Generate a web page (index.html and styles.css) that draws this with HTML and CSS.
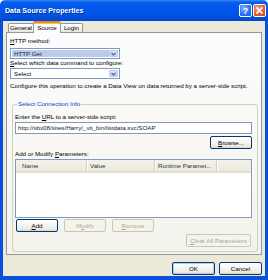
FILE: index.html
```html
<!DOCTYPE html>
<html lang="en">
<head>
  <meta charset="UTF-8" />
  <title>Data Source Properties</title>
  <link rel="stylesheet" href="styles.css">
</head>
<body>
  <div class="window">
    <div class="titlebar">
      <span class="title">Data Source Properties</span>
      <div class="caption">
        <span class="cap help">?</span>
        <span class="cap close">
          <svg width="7" height="7" viewBox="0 0 7 7"><path d="M1 1L6 6M6 1L1 6" stroke="#fff" stroke-width="1.6" stroke-linecap="square"/></svg>
        </span>
      </div>
    </div>

    <div class="frame">
      <div class="tabs">
        <span class="tab t-general">General</span>
        <span class="tab t-source active">Source</span>
        <span class="tab t-login">Login</span>
      </div>

      <div class="panel">
        <div class="lbl first"><u>H</u>TTP method:</div>
        <div class="combo">
          <span class="val sel">HTTP Get</span>
          <span class="drop"><svg width="5" height="4" viewBox="0 0 5 4"><path d="M0.5 0.8L2.5 2.8L4.5 0.8" fill="none" stroke="#4d6185" stroke-width="1.2"/></svg></span>
        </div>
        <div class="lbl"><u>S</u>elect which data command to configure:</div>
        <div class="combo second">
          <span class="val">Select</span>
          <span class="drop"><svg width="5" height="4" viewBox="0 0 5 4"><path d="M0.5 0.8L2.5 2.8L4.5 0.8" fill="none" stroke="#4d6185" stroke-width="1.2"/></svg></span>
        </div>
        <div class="lbl note">Configure this operation to create a Data View on data returned by a server-side script.</div>

        <fieldset class="group">
          <legend>Select Connection Info</legend>
          <div class="lbl url-lbl">Enter the <u>U</u>RL to a server-side script:</div>
          <div class="field">http://sbx08/sites/Harry/_vti_bin/listdata.svc/SOAP</div>
          <div class="row right">
            <button class="btn"><u>B</u>rowse...</button>
          </div>
          <div class="lbl params-lbl">Add or Modify <u>P</u>arameters:</div>
          <div class="list">
            <div class="list-head">
              <span class="col c-name">Name</span>
              <span class="col c-value">Value</span>
              <span class="col c-runtime">Runtime Paramet...</span>
              <span class="col c-rest"></span>
            </div>
          </div>
          <div class="row actions">
            <button class="btn"><u>A</u>dd</button>
            <button class="btn off">M<u>o</u>dify</button>
            <button class="btn off"><u>R</u>emove</button>
          </div>
          <div class="row right">
            <button class="btn off wide"><u>C</u>lear All Parameters</button>
          </div>
        </fieldset>
      </div>

      <div class="footer">
        <button class="btn default">OK</button>
        <button class="btn">Cancel</button>
      </div>
    </div>
  </div>
</body>
</html>
```

FILE: styles.css
```css
* {
  box-sizing: border-box;
}

html,
body {
  margin: 0;
  padding: 0;
}

body {
  width: 268px;
  height: 280px;
  overflow: hidden;
  background: #fff;
  font-family: "Liberation Sans", Arial, sans-serif;
  font-size: 6.2px;
  color: #000;
}

u {
  text-decoration: underline;
  text-underline-offset: 1px;
}

.window {
  width: 268px;
  height: 280px;
  display: flex;
  flex-direction: column;
}

/* title bar */
.titlebar {
  height: 21px;
  flex: none;
  display: flex;
  align-items: center;
  justify-content: space-between;
  padding: 0 2px 0 5px;
  border-radius: 5px 5px 0 0;
  background: linear-gradient(#3d8ef8 0, #0a5fea 2px, #0058ee 6px, #0055e5 14px, #0047d0 21px);
}

.title {
  color: #fff;
  font-size: 7.1px;
  font-weight: bold;
  text-shadow: 1px 1px 0 #0b2a9a;
}

.caption {
  display: flex;
  gap: 1px;
}

.cap {
  width: 13px;
  height: 13px;
  border: 1px solid #fff;
  border-radius: 2px;
  display: flex;
  align-items: center;
  justify-content: center;
  color: #fff;
  font-size: 9px;
  font-weight: bold;
}

.help {
  background: radial-gradient(circle at 35% 30%, #7eb0ff, #2a6ef2 60%, #1a55d8);
}

.close {
  background: radial-gradient(circle at 35% 30%, #f7a384, #e25a2c 60%, #c8401a);
}

/* window body */
.frame {
  flex: 1;
  display: flex;
  flex-direction: column;
  border: solid #0b4fdc;
  border-width: 0 3px 4px;
  padding: 0 3px;
  background: #ece9d8;
}

.tabs {
  height: 11px;
  display: flex;
  align-items: flex-end;
  padding-left: 2px;
}

.tab {
  height: 9px;
  line-height: 8px;
  text-align: center;
  border: 1px solid #919b9c;
  border-bottom: none;
  border-radius: 2px 2px 0 0;
  background: linear-gradient(#fff, #f4f3ee 60%, #e6e5dc);
}

.t-general {
  width: 26px;
}

.t-source {
  width: 28px;
  margin-left: -1px;
}

.t-login {
  width: 23px;
  margin-left: -1px;
}

.tab.active {
  position: relative;
  z-index: 1;
  height: 12px;
  margin-bottom: -1px;
  line-height: 9px;
  border-top: 2px solid #e68b2c;
  box-shadow: inset 0 1px 0 #ffc83c;
  background: #fcfcfe;
}

.panel {
  height: 223px;
  flex: none;
  display: flex;
  flex-direction: column;
  padding: 0 3px;
  border: 1px solid #919b9c;
  background: linear-gradient(#fcfcfe, #f7f6f2 70%, #f3f2ec);
}

.lbl {
  height: 8px;
  line-height: 8px;
  white-space: nowrap;
}

.lbl.first {
  margin-top: 4px;
}

.combo {
  width: 110px;
  height: 11px;
  margin-top: 3px;
  display: flex;
  padding: 1px;
  border: 1px solid #7f9db9;
  background: #fff;
}

.combo.second {
  margin-top: 1px;
}

.combo .val {
  flex: 1;
  line-height: 7px;
  padding-left: 2px;
}

.combo .sel {
  background: #bccbea;
  color: #14234a;
}

.drop {
  width: 9px;
  display: flex;
  align-items: center;
  justify-content: center;
  border: 1px solid #b7c9f0;
  border-radius: 1px;
  background: linear-gradient(#dce6fd, #b9cdf7);
}

.lbl.note {
  margin-top: 3px;
}

/* group box */
.group {
  margin: 10px 0 0 2px;
  min-width: 0;
  padding: 5px 5px 4px 2px;
  border: 1px solid #d0d0bf;
  border-radius: 3px;
}

.group legend {
  margin-left: 2px;
  padding: 0 1px;
  line-height: 8px;
  color: #0046d5;
}

.field {
  height: 12px;
  margin-top: 1px;
  padding-left: 2px;
  line-height: 10px;
  border: 1px solid #7f9db9;
  background: #fff;
  color: #222;
}

.row {
  display: flex;
}

.row.right {
  justify-content: flex-end;
  margin-top: 2px;
}

.params-lbl {
  margin-top: 1px;
}

.list {
  height: 59px;
  margin-top: 1px;
  border: 1px solid #7f9db9;
  background: #fff;
}

.list-head {
  height: 13px;
  display: flex;
  background: linear-gradient(#f3f2e8, #ebeadb);
  border-bottom: 2px solid #e2dfcf;
}

.col {
  line-height: 11px;
  padding-left: 3px;
  color: #333;
  white-space: nowrap;
  border-right: 1px solid #d3d0bf;
  box-shadow: 1px 0 0 #fff;
}

.c-name {
  width: 71px;
  padding-left: 6px;
}

.c-value {
  width: 68px;
}

.c-runtime {
  width: 62px;
}

.c-rest {
  flex: 1;
  border-right: none;
  box-shadow: none;
}

.actions {
  margin-top: 1px;
  padding-left: 1px;
  gap: 6px;
}

/* buttons */
.btn {
  width: 42px;
  height: 13px;
  padding: 0;
  font: inherit;
  line-height: 11px;
  color: #000;
  border: 1px solid #003c74;
  border-radius: 2px;
  background: linear-gradient(#fff, #f6f5f1 45%, #ebe9e0 85%, #d8d3c7);
}

.btn.off {
  color: #aca899;
  border-color: #c9c7ba;
  background: #f5f4ea;
}

.btn.wide {
  width: 65px;
  margin-right: 1px;
}

.footer {
  display: flex;
  justify-content: flex-end;
  gap: 4px;
  margin-top: 7px;
}

.footer .btn {
  width: 43px;
}

.btn.default {
  box-shadow: inset 0 0 0 1px #b4cbf3;
}
```
